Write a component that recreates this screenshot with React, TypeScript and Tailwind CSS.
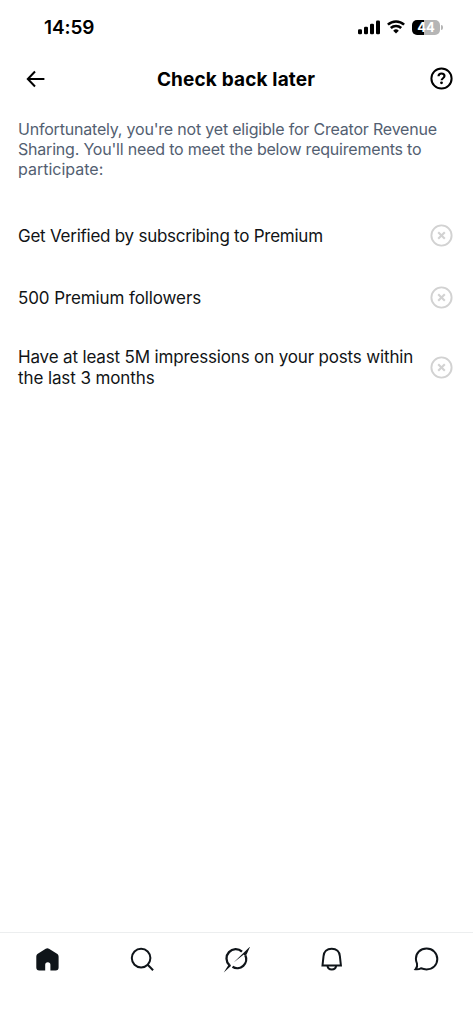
import type { ReactNode } from 'react';

function StatusBar() {
  return (
    <header className="flex h-[54px] items-center justify-between pr-[30px] pl-[44px]">
      <span className="pt-px text-[19px] leading-6 font-semibold tracking-[-0.1px]">14:59</span>
      <div className="flex items-center">
        <svg className="mr-[7px] h-[15px] w-[22px]" viewBox="0 0 22 15" fill="#000">
          <rect x="0" y="9.2" width="4" height="5" rx="1.2" />
          <rect x="6" y="6.8" width="4" height="7.4" rx="1.2" />
          <rect x="12" y="3.8" width="4" height="10.4" rx="1.2" />
          <rect x="18" y="0.6" width="4" height="13.6" rx="1.2" />
        </svg>
        <svg className="mr-[7px] h-[14px] w-[18px]" viewBox="0 0 18 14" fill="none" stroke="#000" strokeWidth="2.5">
          <path d="M.9 4.7a11.6 11.6 0 0 1 16.2 0" />
          <path d="M3.8 8a7.5 7.5 0 0 1 10.4 0" />
          <path d="M9 13.6 6.2 10.7a4 4 0 0 1 5.6 0Z" fill="#000" stroke="none" />
        </svg>
        <div className="flex h-[15px] w-[28px] items-center justify-center rounded-[5px] bg-[linear-gradient(90deg,#000_44%,#b5b5b5_44%)] text-[13px] leading-[15px] font-bold text-white">44</div>
        <span className="ml-px h-[5px] w-[2px] rounded-r-full bg-[#b5b5b5]" />
      </div>
    </header>
  );
}

function TitleBar() {
  return (
    <div className="flex h-[50px] items-center justify-between pr-[20px] pl-[26px]">
      <svg className="h-[18px] w-[20px]" viewBox="0 0 20 18" fill="none" stroke="#000" strokeWidth="2">
        <path d="M18.4 9H2M9 1.5 1.8 9 9 16.5" />
      </svg>
      <h1 className="-ml-[4px] pt-px text-[19px] leading-6 font-bold tracking-[0.15px] whitespace-nowrap">Check back later</h1>
      <svg className="-mt-px h-[23px] w-[23px]" viewBox="0 0 23 23" fill="none" stroke="#000" strokeWidth="2">
        <circle cx="11.5" cy="11.5" r="10.1" />
        <path d="M8.5 9.2c.1-1.7 1.3-2.7 3-2.7 1.8 0 3 1 3 2.6 0 2.1-2.9 2.2-2.9 4.2" strokeWidth="2.1" />
        <circle cx="11.5" cy="15.8" r="1.4" fill="#000" stroke="none" />
      </svg>
    </div>
  );
}

function Requirement({ children, className }: { children: ReactNode; className: string }) {
  return (
    <li className={`flex items-center justify-between pr-[20px] pl-[18px] ${className}`}>
      <div className="text-[17px] leading-[21px] whitespace-nowrap text-[#111416]">{children}</div>
      <svg className="-mt-px h-[23px] w-[23px] shrink-0" viewBox="0 0 23 23" fill="none" stroke="#d2d2d2">
        <circle cx="11.5" cy="11.5" r="10.1" strokeWidth="1.9" />
        <path d="m8.2 8.2 6.6 6.6m0-6.6-6.6 6.6" strokeWidth="2.1" />
      </svg>
    </li>
  );
}

function TabBar() {
  return (
    <nav className="grid h-[92px] grid-cols-5 items-start justify-items-center border-t border-[#eceeef] pt-[14px] text-[#0f1419]">
      <svg className="h-[26px] w-[26px]" viewBox="0 0 26 26" fill="currentColor">
        <path d="M11.7 1.7a3 3 0 0 1 3.3 0l8 5.1c1.1.7 1.6 1.6 1.6 2.9v10.8a3 3 0 0 1-3 3h-5.2v-5.7a2.6 2.6 0 0 0-5.2 0v5.7H5.3a3 3 0 0 1-3-3V9.7c0-1.3.5-2.2 1.5-2.9Z" />
      </svg>
      <svg className="h-[26px] w-[26px]" viewBox="0 0 26 26" fill="none" stroke="currentColor" strokeWidth="2">
        <circle cx="12.1" cy="11.1" r="9.3" />
        <path d="m18.7 17.7 5.4 5.5" />
      </svg>
      <svg className="ml-px h-[26px] w-[28px]" viewBox="0 0 28 26" fill="none">
        <path d="M6.4 18.1A9 9 0 0 1 19 4.7M22.3 8.2A9 9 0 0 1 9.5 19.8" stroke="currentColor" strokeWidth="2.3" />
        <path d="M10.6 15.6 20.6 5.8 27.2-.6 23.6 7.4l-2.2 1.2-.6-1.2ZM.8 25.4l4.8-7.6 1.9-.2.4 1.5Z" fill="currentColor" />
      </svg>
      <svg className="ml-[2px] h-[26px] w-[26px]" viewBox="0 0 26 26" fill="none" stroke="currentColor" strokeWidth="2">
        <path d="M4.5 9.3C4.7 4.8 8 1.7 12.7 1.7s8 3.1 8.2 7.6l1 9.1H3.5Z" />
        <path d="M8.4 18.4c.3 2.8 1.8 4.2 4.4 4.2s4.1-1.4 4.4-4.2" />
      </svg>
      <svg className="h-[26px] w-[26px]" viewBox="0 0 26 26" fill="none" stroke="currentColor" strokeWidth="2">
        <path d="M13.6 1.6C7.3 1.6 2.9 6.1 2.9 11.8c0 2 .4 3.4 1.1 4.9.5 1.8 0 3.8-1.4 5.5 2 .2 3.7 0 5.3-.9 1.6.6 3.5 1.1 5.6 1.1 6.5 0 10.8-4.6 10.8-10.4S19.7 1.6 13.6 1.6Z" />
      </svg>
    </nav>
  );
}

export default function App() {
  return (
    <div className="flex h-screen w-full flex-col bg-white font-['Inter',sans-serif] text-black">
      <StatusBar />
      <TitleBar />
      <main className="flex-1 pt-[15px]">
        <p className="pl-[18px] text-[16px] leading-[20px] whitespace-nowrap text-[#536071]">
          <span className="block tracking-[-0.2px]">Unfortunately, you're not yet eligible for Creator Revenue</span>
          <span className="block tracking-[-0.2px]">Sharing. You'll need to meet the below requirements to</span>
          <span className="block tracking-normal">participate:</span>
        </p>
        <ul className="mt-[26px]">
          <Requirement className="h-[62px]">
            <span className="block tracking-[-0.25px]">Get Verified by subscribing to Premium</span>
          </Requirement>
          <Requirement className="h-[62px]">
            <span className="block tracking-[-0.1px]">500 Premium followers</span>
          </Requirement>
          <Requirement className="h-[78px]">
            <span className="block tracking-[-0.16px]">Have at least 5M impressions on your posts within</span>
            <span className="block tracking-[-0.1px]">the last 3 months</span>
          </Requirement>
        </ul>
      </main>
      <TabBar />
    </div>
  );
}
